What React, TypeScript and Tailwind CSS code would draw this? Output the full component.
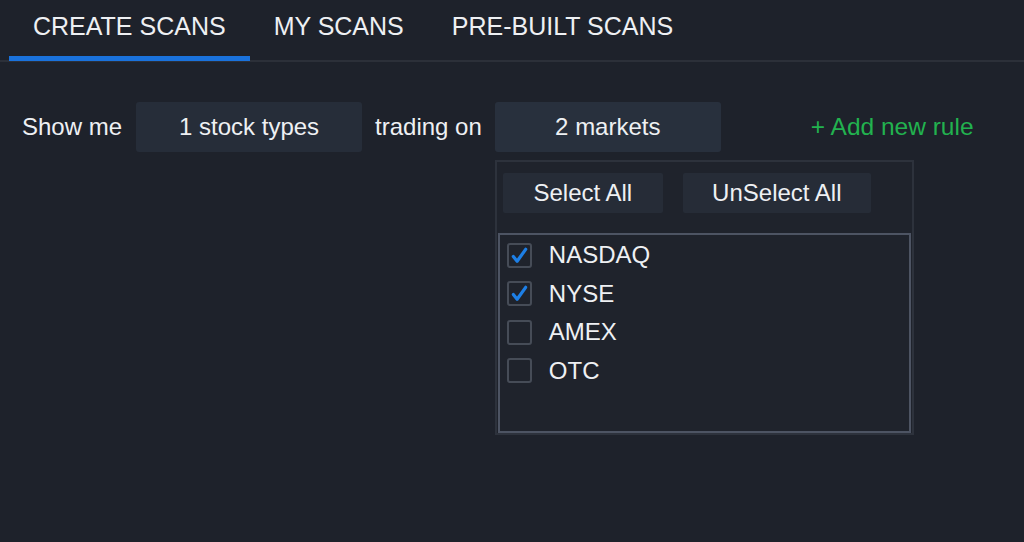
import React, { useState } from 'react';

const TABS = ['CREATE SCANS', 'MY SCANS', 'PRE-BUILT SCANS'];

const MARKETS = [
  { id: 'nasdaq', label: 'NASDAQ', checked: true },
  { id: 'nyse', label: 'NYSE', checked: true },
  { id: 'amex', label: 'AMEX', checked: false },
  { id: 'otc', label: 'OTC', checked: false },
];

function CheckBox({ checked }: { checked: boolean }) {
  return (
    <span className="w-[25px] h-[25px] shrink-0 rounded-[3px] border-2 border-[#464c57] flex items-center justify-center">
      {checked && (
        <svg viewBox="0 0 20 20" className="w-[19px] h-[19px]">
          <path d="M3.5 11 L7.5 16 L16.5 3.5" fill="none" stroke="#1d7fe6" strokeWidth="3.4" strokeLinecap="round" strokeLinejoin="round" />
        </svg>
      )}
    </span>
  );
}

export default function App() {
  const [active, setActive] = useState(0);
  const [markets, setMarkets] = useState(MARKETS);

  const toggle = (id: string) =>
    setMarkets(markets.map(m => (m.id === id ? { ...m, checked: !m.checked } : m)));

  return (
    <div className="w-[1024px] h-[542px] bg-[#1e222b] text-[#eef0f3] overflow-hidden whitespace-nowrap" style={{ fontFamily: '"Liberation Sans", Arial, sans-serif' }}>
      {/* Tabs */}
      <div className="flex items-start pl-[9px] pt-[14px] border-b-2 border-[#2c3039] h-[62px]">
        {TABS.map((tab, idx) => (
          <button
            key={tab}
            onClick={() => setActive(idx)}
            className={
              'px-6 pb-[17px] text-[25px] leading-none border-b-[5px] ' +
              (active === idx ? 'border-[#1a72dc]' : 'border-transparent')
            }
          >
            {tab}
          </button>
        ))}
      </div>

      {/* Rule row */}
      <div className="flex items-start pl-[22px] pt-[40px]">
        <div className="flex items-center h-[50px] text-[24px]">Show me</div>
        <button className="ml-[14px] w-[226px] h-[50px] shrink-0 rounded-[3px] bg-[#262d39] text-[24px]">1 stock types</button>
        <div className="ml-[13px] flex items-center h-[50px] text-[24px]">trading on</div>

        <div className="ml-[13px] relative shrink-0">
          <button className="w-[226px] h-[50px] rounded-[3px] bg-[#28303d] text-[24px]">2 markets</button>

          {/* Dropdown */}
          <div className="absolute left-0 top-[58px] w-[419px] h-[275px] border-2 border-[#2d323c] bg-[#1f232c] flex flex-col">
            <div className="flex gap-[20px] pl-[6px] pt-[11px]">
              <button className="w-[160px] h-[40px] rounded-[2px] bg-[#262c37] text-[24px]">Select All</button>
              <button className="w-[188px] h-[40px] rounded-[2px] bg-[#262c37] text-[24px]">UnSelect All</button>
            </div>
            <div className="mt-[20px] mx-[1px] h-[200px] border-2 border-[#4d5463] flex flex-col pt-[1px] pl-[7px]">
              {markets.map(m => (
                <label key={m.id} onClick={() => toggle(m.id)} className="flex items-center h-[38.5px] gap-[17px] cursor-pointer">
                  <CheckBox checked={m.checked} />
                  <span className="text-[24px] leading-none">{m.label}</span>
                </label>
              ))}
            </div>
          </div>
        </div>

        <button className="ml-[90px] flex items-center h-[50px] text-[24.5px] text-[#22b24f]">+ Add new rule</button>
      </div>
    </div>
  );
}
